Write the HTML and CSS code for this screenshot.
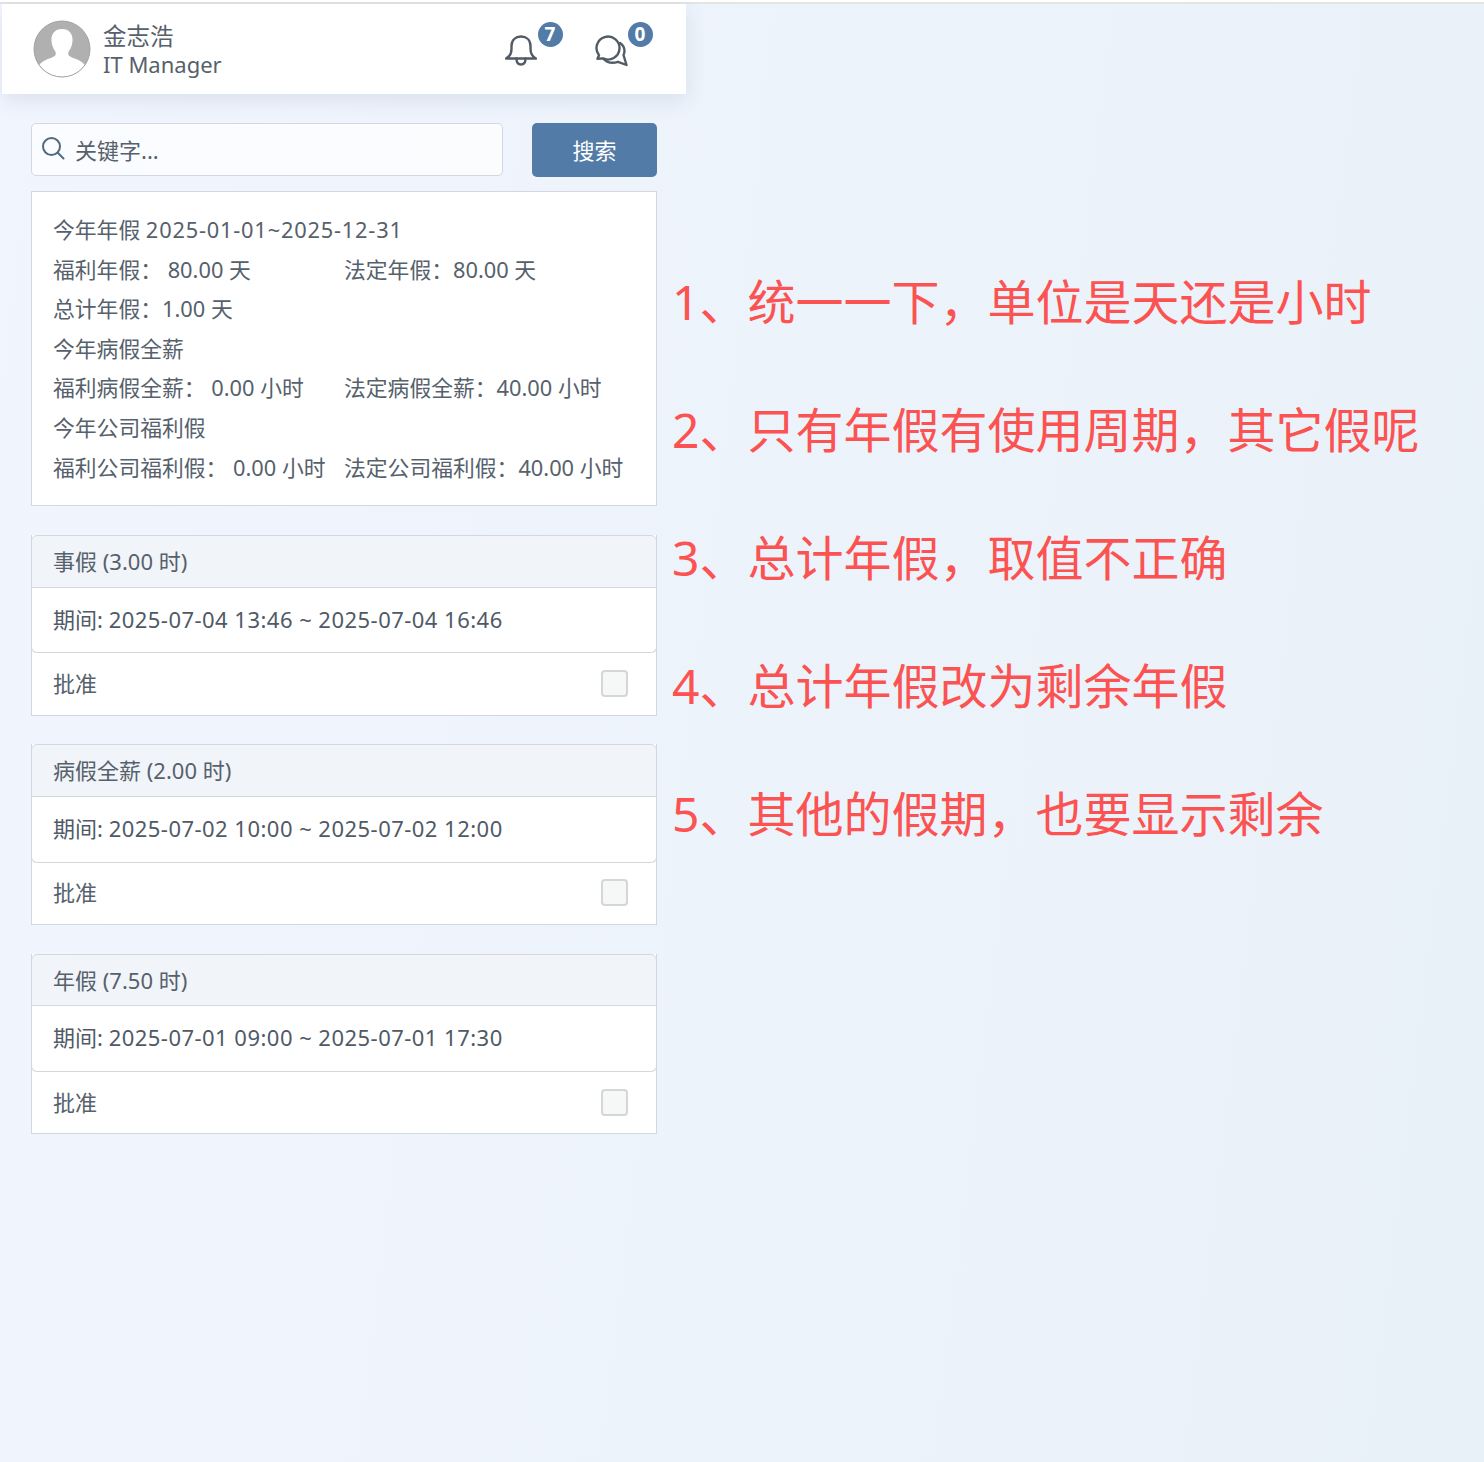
FILE: index.html
```html
<!DOCTYPE html>
<html lang="zh-CN">
<head>
    <meta charset="UTF-8">
    <meta name="viewport" content="width=device-width, initial-scale=1.0">
    <title>假期审批</title>
    <link rel="stylesheet" href="styles.css">
</head>
<body>
    <div class="page">
        <div class="app">
            <header class="top-bar">
                <div class="user">
                    <svg class="avatar" viewBox="0 0 58 58">
                        <defs>
                            <clipPath id="avatarClip"><circle cx="29" cy="29" r="28"/></clipPath>
                        </defs>
                        <circle cx="29" cy="29" r="28" fill="#b0b0b0"/>
                        <path clip-path="url(#avatarClip)" fill="#fff" d="M29 9c-7.500 0-11 5.500-10.500 12 .3 4 1.500 7.500 3.500 10 1 1.300 1 3.500 0 4.800-2.500 2.400-11.500 3.800-15 8.200-1 1.300-1.500 3-1.500 5v10h47V49c0-2-.5-3.700-1.500-5-3.500-4.400-12.500-5.800-15-8.200-1-1.300-1-3.500 0-4.800 2-2.500 3.200-6 3.500-10C40 14.500 36.500 9 29 9z"/>
                        <circle cx="29" cy="29" r="28" fill="none" stroke="#a2a2a2" stroke-width="1"/>
                    </svg>
                    <div class="user-text">
                        <div class="user-name">金志浩</div>
                        <div>IT Manager</div>
                    </div>
                </div>
                <div class="alerts">
                    <div class="alert">
                        <svg class="bell-icon" viewBox="0 0 32 31" fill="none" stroke="#525c66" stroke-width="2.400" stroke-linecap="round" stroke-linejoin="round">
                            <path d="M1 23.500C4 22 6.500 19 6.500 14v-3C6.500 5 10.500 1.500 16 1.500S25.500 5 25.500 11v3c0 5 2.500 8 5.500 9.500z"/>
                            <path d="M11.500 23.500c0 4 2 6 4.500 6s4.500-2 4.500-6"/>
                        </svg>
                        <span class="badge">7</span>
                    </div>
                    <div class="alert">
                        <svg class="chat-icon" viewBox="0 0 34 34" fill="none" stroke="#525c66" stroke-width="2.400" stroke-linecap="round" stroke-linejoin="round">
                            <path d="M2.500 24.800L4 21.200A11.500 11.500 0 1 1 8 24.400z"/>
                            <path d="M25 9c3 2 4.500 5 4.500 8 0 1.500-.5 3-1 4l3 10-8.500-3.200c-5 1.700-10.500 1.200-14.500-2.800"/>
                        </svg>
                        <span class="badge">0</span>
                    </div>
                </div>
            </header>

            <div class="content">
                <div class="search-row">
                    <div class="search-box">
                        <svg class="search-icon" viewBox="0 0 24 24" fill="none" stroke="#4f6a80" stroke-width="2" stroke-linecap="round">
                            <circle cx="10.500" cy="10.500" r="8.500"/>
                            <path d="M17 17l5.500 5.500"/>
                        </svg>
                        <span class="search-text">关键字...</span>
                    </div>
                    <button class="search-btn">搜索</button>
                </div>

                <section class="summary">
                    <div>今年年假 <span class="range">2025-01-01~2025-12-31</span></div>
                    <div class="summary-pair">
                        <span>福利年假： 80.00 天</span>
                        <span>法定年假：80.00 天</span>
                    </div>
                    <div>总计年假：1.00 天</div>
                    <div>今年病假全薪</div>
                    <div class="summary-pair">
                        <span>福利病假全薪： 0.00 小时</span>
                        <span>法定病假全薪：40.00 小时</span>
                    </div>
                    <div>今年公司福利假</div>
                    <div class="summary-pair">
                        <span>福利公司福利假： 0.00 小时</span>
                        <span>法定公司福利假：40.00 小时</span>
                    </div>
                </section>

                <section class="leave-card">
                    <div class="leave-head">事假 (3.00 时)</div>
                    <div class="leave-body">期间: <span class="period">2025-07-04 13:46 ~ 2025-07-04 16:46</span></div>
                    <div class="leave-foot"><span class="foot-label">批准</span><span class="check"></span></div>
                </section>

                <section class="leave-card">
                    <div class="leave-head">病假全薪 (2.00 时)</div>
                    <div class="leave-body">期间: <span class="period">2025-07-02 10:00 ~ 2025-07-02 12:00</span></div>
                    <div class="leave-foot"><span class="foot-label">批准</span><span class="check"></span></div>
                </section>

                <section class="leave-card">
                    <div class="leave-head">年假 (7.50 时)</div>
                    <div class="leave-body">期间: <span class="period">2025-07-01 09:00 ~ 2025-07-01 17:30</span></div>
                    <div class="leave-foot"><span class="foot-label">批准</span><span class="check"></span></div>
                </section>
            </div>
        </div>

        <ol class="notes">
            <li>1、统一一下，单位是天还是小时</li>
            <li>2、只有年假有使用周期，其它假呢</li>
            <li>3、总计年假，取值不正确</li>
            <li>4、总计年假改为剩余年假</li>
            <li>5、其他的假期，也要显示剩余</li>
        </ol>
    </div>
</body>
</html>
```

FILE: styles.css
```css
:root {
    --text-color: #56616c;
    --line-color: #d3d7df;
    --primary-color: #537ba8;
    --note-color: #fb5252;
}

html, body {
    margin: 0;
    height: 100%;
}

body {
    font-family: "Noto Sans", "Noto Sans CJK SC", sans-serif;
    font-size: 22px;
    color: var(--text-color);
    background: linear-gradient(97deg, #f1f5fe 0%, #e9f1f8 100%);
    border-top: 2px solid #fff;
    box-sizing: border-box;
    overflow: hidden;
}

.page {
    display: flex;
    align-items: flex-start;
    border-top: 2px solid #e3e4e4;
}

.app {
    width: 684px;
    margin-left: 2px;
    flex-shrink: 0;
}

.top-bar {
    display: flex;
    justify-content: space-between;
    align-items: center;
    box-sizing: border-box;
    height: 90px;
    padding: 0 57px 0 31px;
    background: #fff;
    box-shadow: 0 6px 20px rgba(60, 80, 110, 0.12);
}

.user {
    display: flex;
    align-items: center;
    gap: 12px;
}

.avatar {
    width: 58px;
    height: 58px;
}

.user-text {
    margin-top: 2px;
    line-height: 29px;
}

.user-name {
    margin-bottom: -1px;
    font-size: 23.500px;
}

.alerts {
    display: flex;
    gap: 58px;
    margin-top: 4px;
}

.alert {
    position: relative;
    height: 34px;
}

.bell-icon {
    display: block;
    width: 32px;
    height: 31px;
    margin-top: 1px;
}

.chat-icon {
    display: block;
    width: 34px;
    height: 34px;
}

.badge {
    position: absolute;
    top: -12.500px;
    left: 32.500px;
    width: 25px;
    height: 25px;
    border-radius: 50%;
    background: var(--primary-color);
    color: #fff;
    font-size: 19px;
    font-weight: 700;
    line-height: 25px;
    text-align: center;
}

.content {
    padding: 29px 29px 0;
}

.search-row {
    display: flex;
    justify-content: space-between;
    align-items: flex-start;
}

.search-box {
    display: flex;
    align-items: center;
    gap: 10px;
    box-sizing: border-box;
    width: 472px;
    height: 53px;
    padding-left: 9px;
    background: rgba(255, 255, 255, 0.7);
    border: 1px solid var(--line-color);
    border-radius: 5px;
}

.search-icon {
    width: 24px;
    height: 24px;
    margin-top: -3px;
}

.search-text {
    margin-top: -1px;
}

.search-btn {
    width: 125px;
    height: 54px;
    padding: 0 0 2px;
    border: none;
    border-radius: 5px;
    background: var(--primary-color);
    color: #fff;
    font: inherit;
}

.summary {
    box-sizing: border-box;
    height: 315px;
    margin-top: 14px;
    padding: 18px 21px;
    background: #fff;
    border: 1px solid var(--line-color);
    font-size: 21.800px;
    line-height: 39.600px;
}

.summary-pair {
    display: grid;
    grid-template-columns: 291px 1fr;
    white-space: nowrap;
}

.range {
    letter-spacing: 0.800px;
}

.period {
    letter-spacing: 0.470px;
}

.leave-card {
    margin-top: 29px;
    background: #fff;
    border: 1px solid var(--line-color);
    border-top: none;
}

.leave-card + .leave-card {
    margin-top: 28.800px;
}

.leave-head {
    box-sizing: border-box;
    height: 52.600px;
    margin: 0 -1px;
    padding: 0 21px;
    background: #f1f4f9;
    border: 1px solid var(--line-color);
    border-radius: 6px 6px 0 0;
    line-height: 50px;
}

.leave-body {
    box-sizing: border-box;
    height: 65.800px;
    margin: 0 -1px;
    padding: 0 21px;
    border: 1px solid var(--line-color);
    border-top: none;
    border-radius: 0 0 6px 6px;
    line-height: 63.600px;
    color: #4f5a66;
}

.leave-foot {
    display: flex;
    justify-content: space-between;
    align-items: center;
    box-sizing: border-box;
    height: 61.200px;
    padding: 0 28px 0 21px;
}

.foot-label {
    margin-top: -4px;
}

.check {
    box-sizing: border-box;
    width: 27px;
    height: 27px;
    margin-top: -1px;
    background: #f6f7f7;
    border: 2px solid #d4d6d8;
    border-radius: 4px;
}

.notes {
    list-style: none;
    margin: 234px 0 0 -14px;
    padding: 0;
    font-size: 48px;
    line-height: 128px;
    color: var(--note-color);
    white-space: nowrap;
}
```
